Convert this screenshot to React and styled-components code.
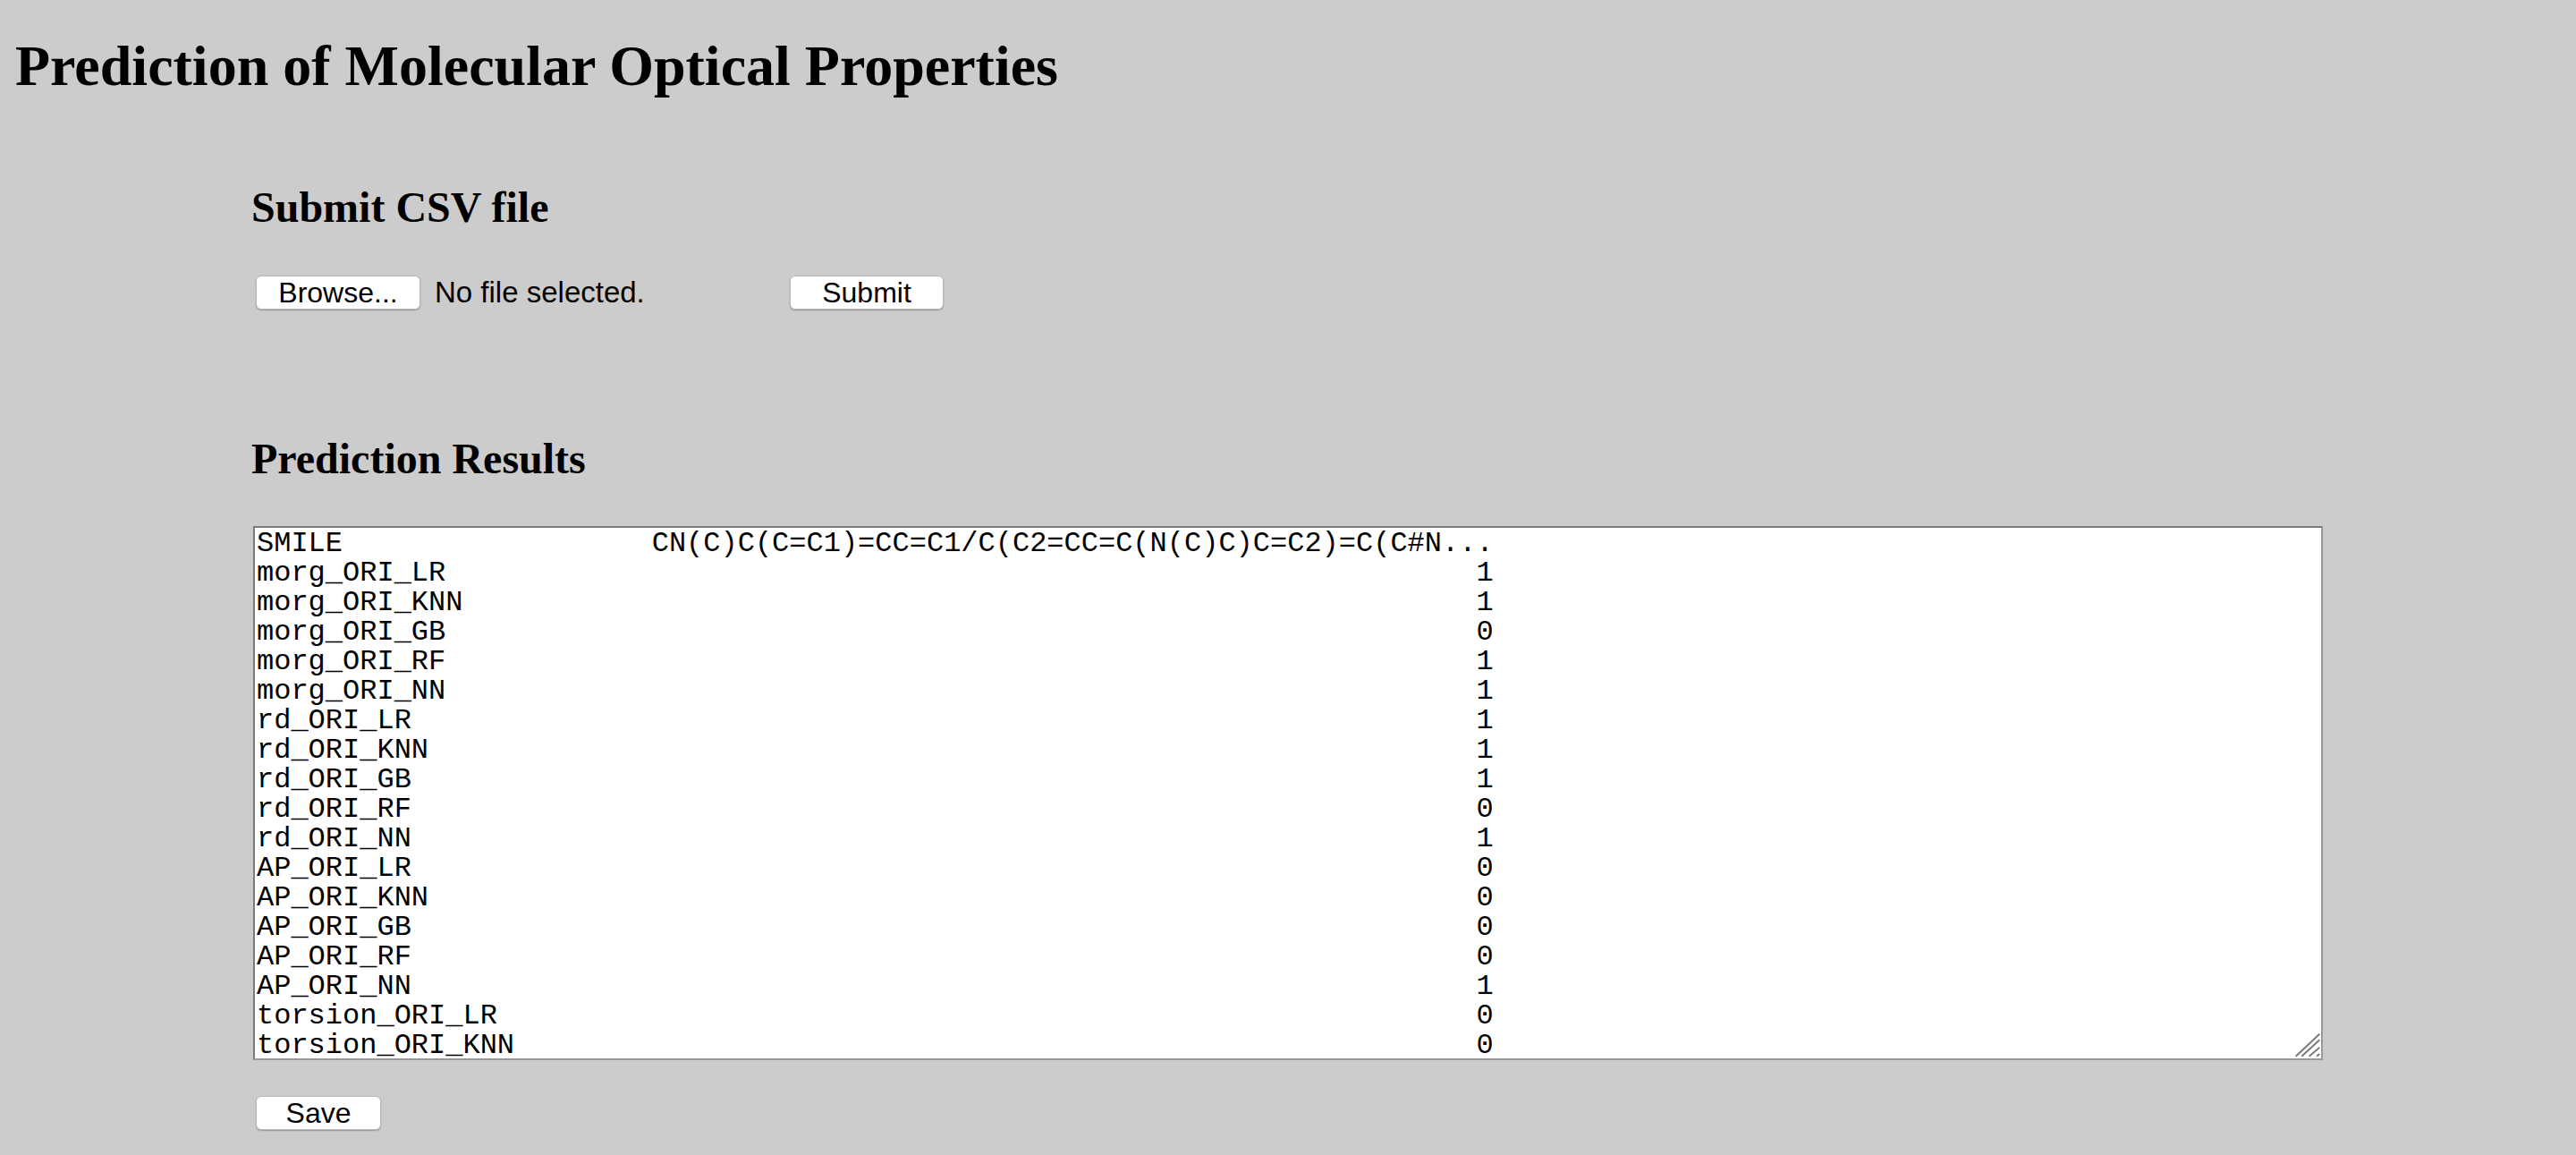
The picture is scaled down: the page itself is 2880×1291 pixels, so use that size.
import React from "react";
import styled, { createGlobalStyle } from "styled-components";

const GlobalStyle = createGlobalStyle`
  html, body {
    margin: 0;
    padding: 0;
    background: #cccccc;
    color: #000;
    font-family: "Liberation Serif", "Times New Roman", serif;
  }
`;

const Page = styled.main`
  padding: 37px 0 40px 0;
`;

const Title = styled.h1`
  margin: 0 0 0 17px;
  font: 700 64px/74px "Liberation Serif", "Times New Roman", serif;
`;

const Section = styled.section`
  margin: ${(p) => p.$top}px 0 0 283px;
`;

const SectionHeading = styled.h2`
  margin: 0 0 0 -2px;
  font: 700 48px/56px "Liberation Serif", "Times New Roman", serif;
`;

const Row = styled.div`
  display: flex;
  align-items: center;
  margin-top: 48px;
`;

const Button = styled.button`
  box-sizing: border-box;
  width: ${(p) => p.$w}px;
  height: 38px;
  margin: ${(p) => p.$mt || 0}px 0 0 3px;
  padding: 0;
  background: #ffffff;
  border: 1px solid #b9b9b9;
  border-radius: 6px;
  box-shadow: 0 1px 1.5px rgba(0, 0, 0, 0.28);
  color: #000;
  font: 400 32px/36px "Liberation Sans", Arial, sans-serif;
  text-align: center;
  cursor: default;
  display: block;
`;

const FileLabel = styled.span`
  display: inline-block;
  width: 394px;
  margin-left: 16px;
  font: 400 33px/36px "Liberation Sans", Arial, sans-serif;
`;

const ResultBox = styled.div`
  position: relative;
  width: 2314px;
  height: 597px;
  margin-top: 47px;
`;

const ResultArea = styled.textarea`
  box-sizing: border-box;
  display: block;
  width: 100%;
  height: 100%;
  margin: 0;
  padding: 1px 2px 0 2px;
  border: 2px solid;
  border-color: #7b7b7b #999999 #999999 #7b7b7b;
  background: #ffffff;
  color: #000;
  font: 400 32px/33px "Liberation Mono", "Courier New", monospace;
  white-space: pre;
  overflow: hidden;
  resize: none;
  outline: none;
`;

const Grip = styled.svg`
  position: absolute;
  right: 2px;
  bottom: 3px;
  width: 30px;
  height: 28px;
  pointer-events: none;
`;

const rows = [
  ["SMILE", "CN(C)C(C=C1)=CC=C1/C(C2=CC=C(N(C)C)C=C2)=C(C#N..."],
  ["morg_ORI_LR", "1"],
  ["morg_ORI_KNN", "1"],
  ["morg_ORI_GB", "0"],
  ["morg_ORI_RF", "1"],
  ["morg_ORI_NN", "1"],
  ["rd_ORI_LR", "1"],
  ["rd_ORI_KNN", "1"],
  ["rd_ORI_GB", "1"],
  ["rd_ORI_RF", "0"],
  ["rd_ORI_NN", "1"],
  ["AP_ORI_LR", "0"],
  ["AP_ORI_KNN", "0"],
  ["AP_ORI_GB", "0"],
  ["AP_ORI_RF", "0"],
  ["AP_ORI_NN", "1"],
  ["torsion_ORI_LR", "0"],
  ["torsion_ORI_KNN", "0"],
];

const resultText = rows
  .map(([k, v]) => k.padEnd(23, " ") + v.padStart(49, " "))
  .join("\n");

export default function App() {
  return (
    <>
      <GlobalStyle />
      <Page>
        <Title>Prediction of Molecular Optical Properties</Title>

        <Section $top={93}>
          <SectionHeading>Submit CSV file</SectionHeading>
          <Row>
            <Button $w={184} type="button">Browse...</Button>
            <FileLabel>No file selected.</FileLabel>
            <Button $w={172} type="button">Submit</Button>
          </Row>
        </Section>

        <Section $top={139}>
          <SectionHeading>Prediction Results</SectionHeading>
          <ResultBox>
            <ResultArea readOnly value={resultText} spellCheck={false} />
            <Grip viewBox="0 0 30 28">
              <g stroke="#7a7a7a" strokeWidth="2" strokeLinecap="butt">
                <line x1="1.7" y1="26.7" x2="28.3" y2="1.7" />
                <line x1="8.3" y1="26.7" x2="28.3" y2="8.3" />
                <line x1="16.7" y1="26.7" x2="28.3" y2="16.7" />
                <line x1="25" y1="26.7" x2="28.3" y2="24" />
              </g>
            </Grip>
          </ResultBox>
          <Button $w={140} $mt={40} type="button">Save</Button>
        </Section>
      </Page>
    </>
  );
}
